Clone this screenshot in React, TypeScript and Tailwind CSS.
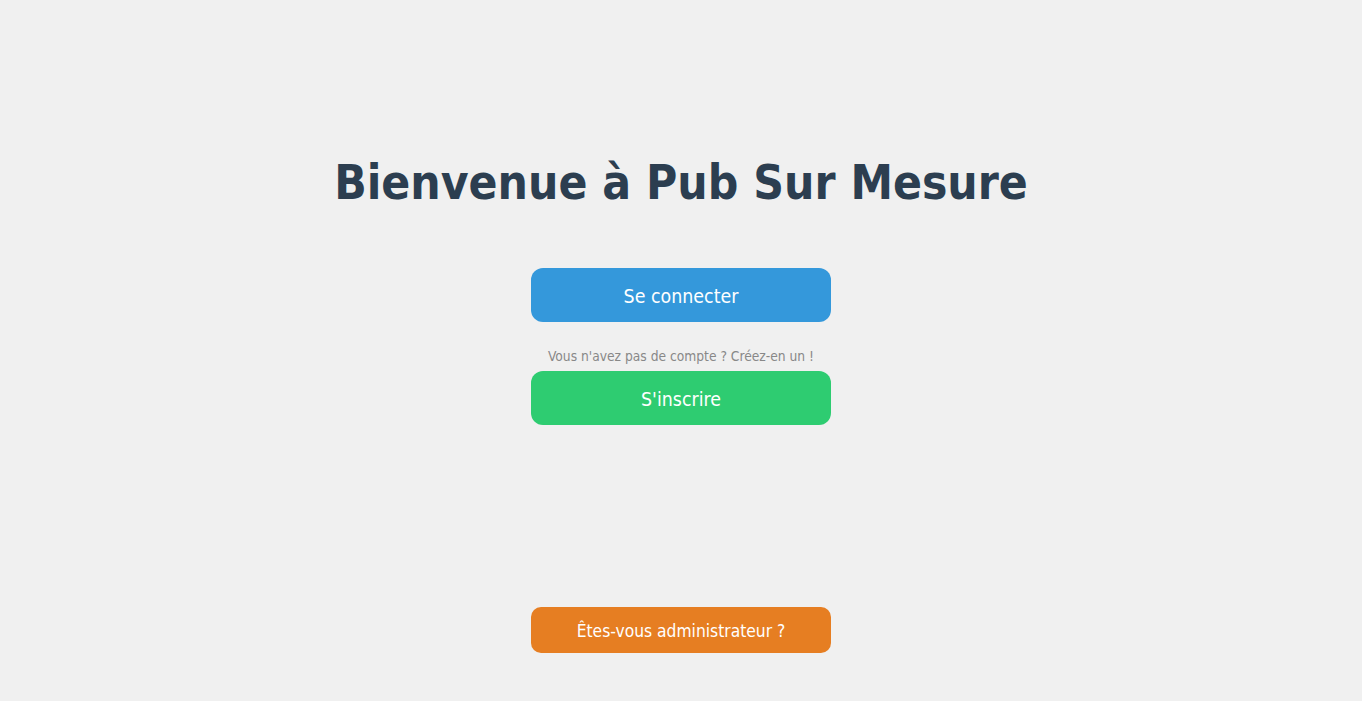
import React from 'react';

const font = { fontFamily: '"DejaVu Sans Condensed", "DejaVu Sans", sans-serif' };

const App: React.FC = () => {
  return (
    <div className="bg-[#f0f0f0] min-h-screen flex flex-col items-center" style={font}>
      <h1 className="mt-[154px] text-[47.5px] leading-[58px] font-bold text-[#2c3e50]">
        Bienvenue à Pub Sur Mesure
      </h1>
      <button className="mt-[56px] w-[300px] h-[54px] pt-[3px] rounded-xl bg-[#3498db] text-white text-[19.4px]">
        Se connecter
      </button>
      <p className="mt-[26px] text-[13.7px] leading-[17px] text-[#888888]">
        Vous n'avez pas de compte ? Créez-en un !
      </p>
      <button className="mt-[6px] w-[300px] h-[54px] pt-[3px] rounded-xl bg-[#2ecc71] text-white text-[19.4px]">
        S'inscrire
      </button>
      <button className="mt-[182px] w-[300px] h-[46px] pt-[3px] rounded-[10px] bg-[#e67e22] text-white text-[17.3px]">
        Êtes-vous administrateur ?
      </button>
    </div>
  );
};

export default App;
